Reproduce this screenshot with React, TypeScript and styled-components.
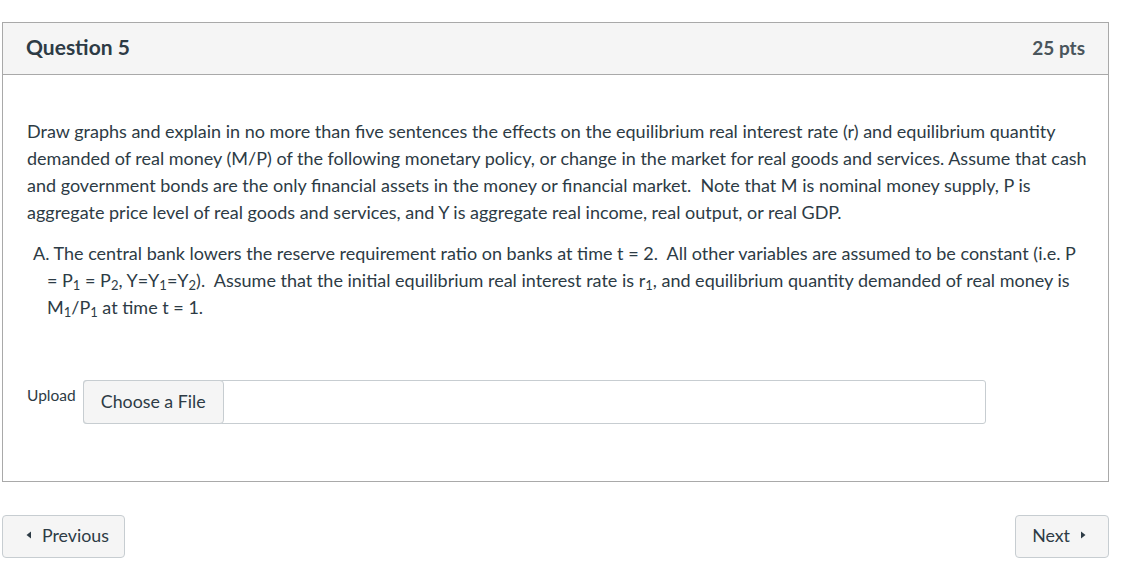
import React from "react";
import styled, { createGlobalStyle } from "styled-components";

const Global = createGlobalStyle`
  html, body { margin: 0; padding: 0; background: #fff; }
  body { font-family: Lato, "Open Sans", "Liberation Sans", sans-serif; color: #2d3b45; }
`;

const Page = styled.div`
  padding: 22px 12px 0 2px;
`;

const Card = styled.section`
  border: 1px solid #a9a9a9;
  background: #fff;
`;

const Header = styled.header`
  display: flex;
  align-items: center;
  justify-content: space-between;
  height: 51px;
  padding: 0 23px 0 23px;
  background: #f5f5f5;
  border-bottom: 1px solid #a9a9a9;
`;

const Title = styled.h2`
  margin: 0;
  padding-bottom: 4px;
  font-size: 21px;
  font-weight: 700;
  color: #2d3b45;
`;

const Points = styled.span`
  padding-bottom: 2px;
  font-size: 19px;
  font-weight: 700;
  color: #4a555c;
`;

const Body = styled.div`
  padding: 43px 18px 57px 24px;
`;

const Text = styled.p`
  margin: 0;
  font-size: 18px;
  line-height: 27px;
  sub {
    font-size: 13px;
    line-height: 0;
    vertical-align: -3px;
  }
`;

const ItemText = styled(Text)`
  margin-top: 14px;
  padding-left: 20px;
  text-indent: -14px;
  padding-right: 9px;
`;

const UploadRow = styled.div`
  display: flex;
  align-items: flex-start;
  gap: 7px;
  margin-top: 59px;
`;

const UploadLabel = styled.label`
  font-size: 15.5px;
  line-height: 20px;
  padding-top: 5px;
  color: #2d3b45;
`;

const FileField = styled.div`
  display: flex;
  width: 903px;
  height: 44px;
  box-sizing: border-box;
  border: 1px solid #c7cdd1;
  border-radius: 3px;
  background: #fff;
`;

const ChooseButton = styled.button`
  margin: -1px 0 -1px -1px;
  width: 141px;
  height: 44px;
  box-sizing: border-box;
  border: 1px solid #c7cdd1;
  border-radius: 4px;
  background: #f5f5f5;
  font-family: inherit;
  font-size: 17.8px;
  color: #2d3b45;
  padding: 0 0 3px;
`;

const Nav = styled.nav`
  display: flex;
  justify-content: space-between;
  margin-top: 33px;
`;

const NavButton = styled.button<{ $side: "prev" | "next" }>`
  display: inline-flex;
  align-items: center;
  gap: 10px;
  height: 43px;
  box-sizing: border-box;
  padding: ${(p) => (p.$side === "prev" ? "0 15px 3px 23px" : "0 22px 3px 16px")};
  border: 1px solid #c7cdd1;
  border-radius: 4px;
  background: #f5f5f5;
  font-family: inherit;
  font-size: 17.8px;
  color: #2d3b45;
`;

const Caret = ({ dir }: { dir: "left" | "right" }) => (
  <svg width="6" height="8" viewBox="0 0 6 8" aria-hidden="true">
    {dir === "left" ? (
      <polygon points="5,0.5 5,7.5 0.5,4" fill="#2d3b45" />
    ) : (
      <polygon points="1,0.5 1,7.5 5.5,4" fill="#2d3b45" />
    )}
  </svg>
);

export default function App() {
  return (
    <>
      <Global />
      <Page>
        <Card>
          <Header>
            <Title>Question 5</Title>
            <Points>25 pts</Points>
          </Header>
          <Body>
            <Text>
              Draw graphs and explain in no more than five sentences the effects on the equilibrium real interest rate (r) and equilibrium quantity demanded of real money (M/P) of the following monetary policy, or change in the market for real goods and services. Assume that cash and government bonds are the only financial assets in the money or financial market.&nbsp; Note that M is nominal money supply, P is aggregate price level of real goods and services, and Y is aggregate real income, real output, or real GDP.
            </Text>
            <ItemText>
              A. The central bank lowers the reserve requirement ratio on banks at time t = 2.&nbsp; All other variables are assumed to be constant (i.e. P = P<sub>1</sub> = P<sub>2</sub>, Y=Y<sub>1</sub>=Y<sub>2</sub>).&nbsp; Assume that the initial equilibrium real interest rate is r<sub>1</sub>, and equilibrium quantity demanded of real money is M<sub>1</sub>/P<sub>1</sub> at time t = 1.
            </ItemText>
            <UploadRow>
              <UploadLabel>Upload</UploadLabel>
              <FileField>
                <ChooseButton type="button">Choose a File</ChooseButton>
              </FileField>
            </UploadRow>
          </Body>
        </Card>
        <Nav>
          <NavButton $side="prev" type="button">
            <Caret dir="left" />
            Previous
          </NavButton>
          <NavButton $side="next" type="button">
            Next
            <Caret dir="right" />
          </NavButton>
        </Nav>
      </Page>
    </>
  );
}
